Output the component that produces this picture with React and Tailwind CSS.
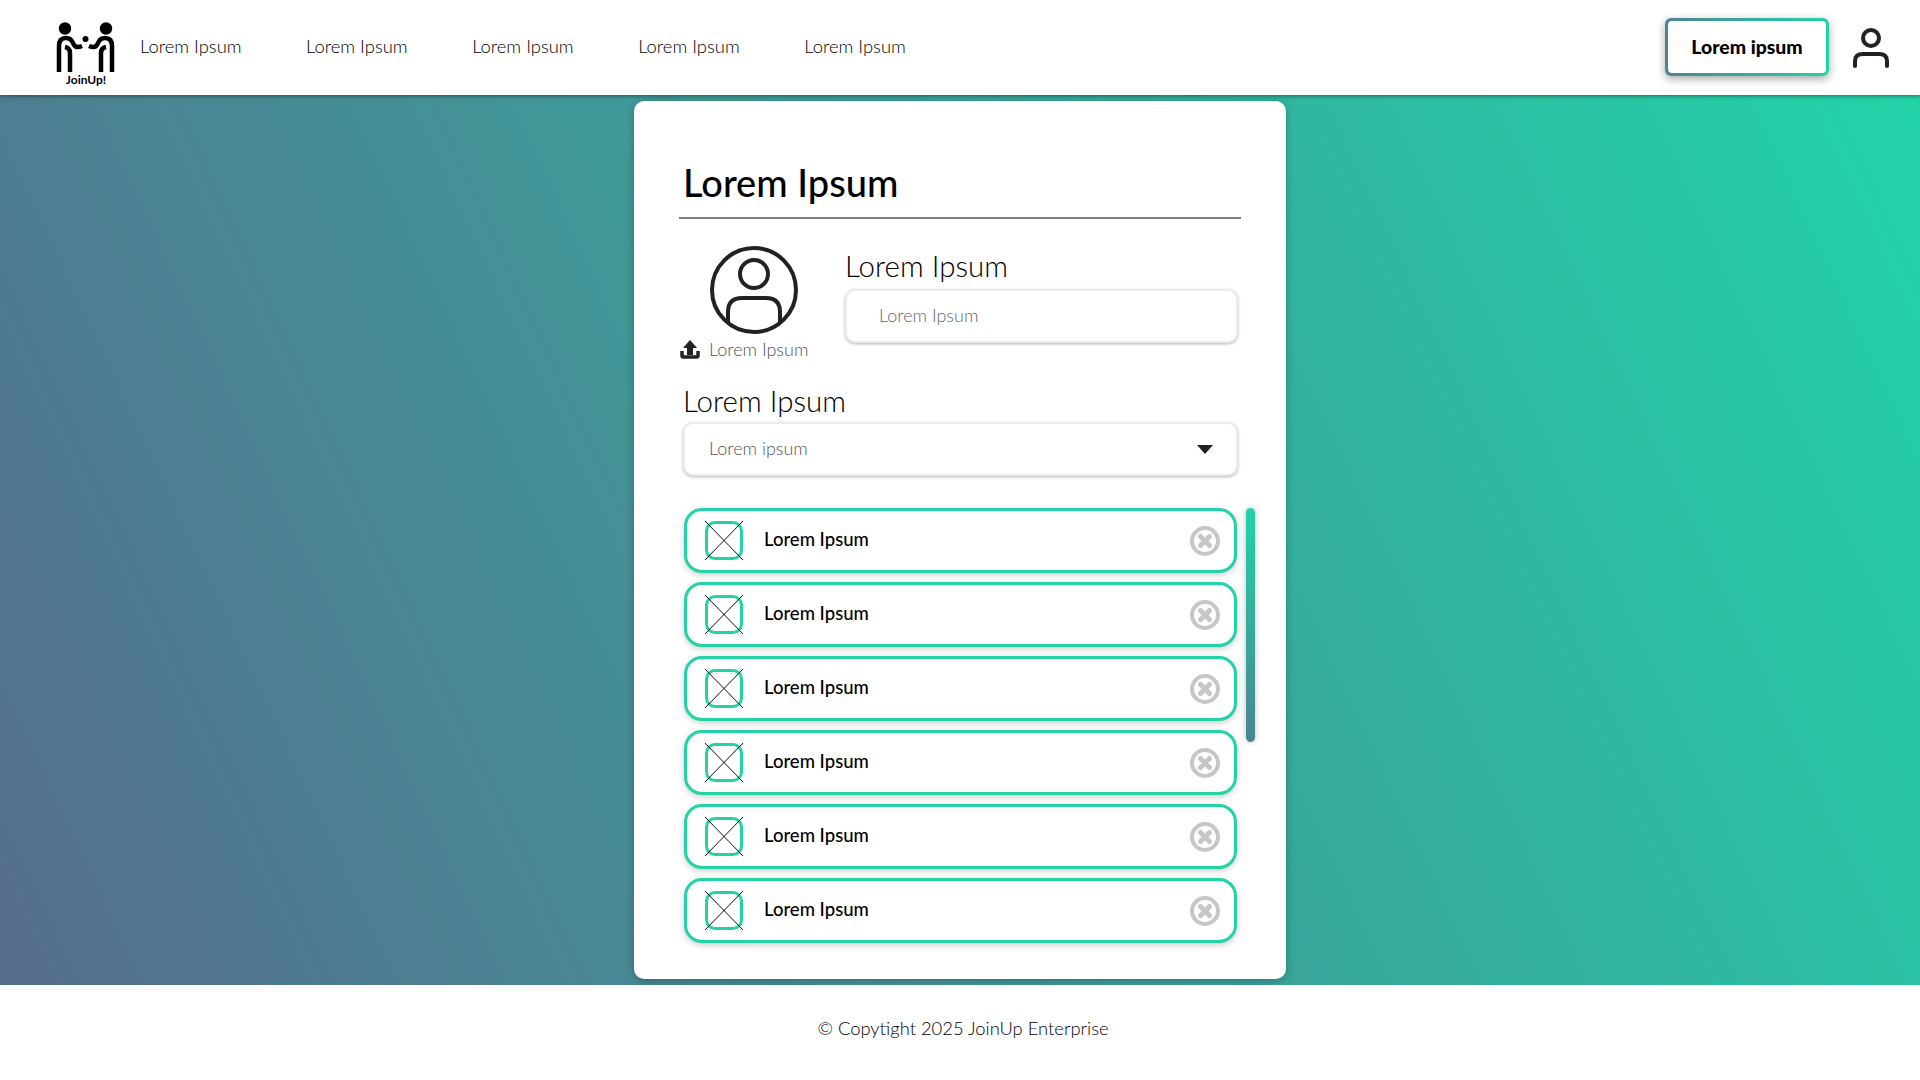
import React from 'react';

const rows = [0, 1, 2, 3, 4, 5];

const Logo = () => (
  <div className="mt-[12px] flex flex-col items-center w-[60px]">
    <svg width="60" height="52" viewBox="0 0 60 52" fill="none" stroke="#000" strokeWidth="4.5" strokeLinecap="round">
      <circle cx="9" cy="6.5" r="6.2" fill="#000" stroke="none" />
      <circle cx="50" cy="6.5" r="6.2" fill="#000" stroke="none" />
      <circle cx="29.5" cy="17" r="3" fill="#000" stroke="none" />
      <path d="M3 50 V24 Q3 16 10 16 Q15 16 17 21 Q19 27 26 24" strokeLinecap="butt" />
      <path d="M14 50 V31 Q14 26 9 25" strokeLinecap="butt" />
      <path d="M56 50 V24 Q56 16 49 16 Q44 16 42 21 Q40 27 33 24" strokeLinecap="butt" />
      <path d="M45 50 V31 Q45 26 50 25" strokeLinecap="butt" />
    </svg>
    <span className="text-[12px] leading-none font-bold text-black">JoinUp!</span>
  </div>
);

const CloseIcon = () => (
  <svg width="32" height="32" viewBox="0 0 32 32" fill="none" stroke="#c6c6c6">
    <circle cx="16" cy="16" r="13" strokeWidth="4" />
    <path d="M11.5 11.5 L20.5 20.5 M20.5 11.5 L11.5 20.5" strokeWidth="5" strokeLinecap="round" />
  </svg>
);

const Row = () => (
  <div className="h-[65px] flex items-center rounded-[18px] border-[3px] border-[#22d3a8] bg-white shadow-[0_2px_6px_rgba(0,0,0,0.2)] pl-[18px] pr-[13px]">
    <div className="relative w-[38px] h-[39px] rounded-[10px] border-[3px] border-[#22d3a8]">
      <svg className="absolute -inset-[3px]" width="38" height="39" viewBox="0 0 38 39" stroke="#111" strokeWidth="1">
        <path d="M0 0 L38 39 M38 0 L0 39" />
      </svg>
    </div>
    <span className="ml-[21px] mb-[1px] text-[18.5px] font-medium text-black flex-1">Lorem Ipsum</span>
    <CloseIcon />
  </div>
);

export default function App() {
  return (
    <div className="w-[1920px] h-[1080px] flex flex-col overflow-hidden bg-white font-['Lato',sans-serif]">
      <header className="relative z-10 h-[95px] shrink-0 flex items-center bg-white shadow-[0_1px_4px_rgba(0,0,0,0.45)] pl-14 pr-[31px]">
        <Logo />
        <nav className="ml-[24px] -mt-[2px] flex gap-[64.5px] text-[18.4px] font-light text-black">
          <a>Lorem Ipsum</a>
          <a>Lorem Ipsum</a>
          <a>Lorem Ipsum</a>
          <a>Lorem Ipsum</a>
          <a>Lorem Ipsum</a>
        </nav>
        <button className="ml-auto -mt-[2px] w-[164px] h-[58px] rounded-[6px] p-[3px] bg-[linear-gradient(90deg,#4b8491,#22d3a8)] shadow-[0_3px_8px_rgba(0,0,0,0.35)]">
          <span className="flex h-full items-center justify-center rounded-[4px] bg-white text-[19.4px] font-black text-black">Lorem ipsum</span>
        </button>
        <svg className="ml-6" width="36" height="40" viewBox="0 0 36 40" fill="none" stroke="#222" strokeWidth="4" strokeLinecap="round">
          <circle cx="18" cy="10" r="8" />
          <path d="M2 38 V33 Q2 26 10 26 H26 Q34 26 34 33 V38" />
        </svg>
      </header>

      <main className="h-[890px] shrink-0 flex justify-center pt-[6px] bg-[linear-gradient(65deg,#566c8c_0%,#22d3a8_100%)]">
        <section className="w-[652px] h-[878px] rounded-[10px] bg-white shadow-[0_2px_8px_rgba(0,0,0,0.25)] pt-[58px] pl-[45px] pr-[31px]">
          <h1 className="pl-[4px] text-[38px] leading-[46px] font-medium text-black">Lorem Ipsum</h1>
          <div className="mt-[12px] h-[2px] w-[562px] bg-[#7f7f7f]" />

          <div className="mt-[27px] flex">
            <div className="w-[166px] shrink-0">
              <svg className="ml-[30px] -mt-[1px]" width="90" height="90" viewBox="0 0 90 90" fill="none" stroke="#222" strokeWidth="4">
                <circle cx="45" cy="45" r="42" />
                <circle cx="45" cy="29" r="14" />
                <path d="M19 78 V67 Q19 53 33 53 H57 Q71 53 71 67 V78" />
              </svg>
              <div className="mt-[1px] pl-[1px] flex items-center gap-[9px]">
                <svg width="20" height="19" viewBox="0 0 20 19" fill="none">
                  <path d="M10 0 L17 8 H13 V15 H7 V8 H3 Z" fill="#222" />
                  <path d="M2 11 V15.5 Q2 17 3.5 17 H16.5 Q18 17 18 15.5 V11" stroke="#222" strokeWidth="3.5" />
                </svg>
                <span className="text-[18px] font-light text-[#555]">Lorem Ipsum</span>
              </div>
            </div>
            <div className="flex-1">
              <label className="block text-[29.5px] leading-[40px] font-light text-black">Lorem Ipsum</label>
              <div className="mt-[3px] w-[393px] h-[54px] flex items-center rounded-[10px] border-2 border-[#ececec] bg-white shadow-[0_1px_3px_rgba(0,0,0,0.3)] pl-[32px] text-[18px] font-light text-[#666]">
                <span className="mb-[2px]">Lorem Ipsum</span>
              </div>
            </div>
          </div>

          <label className="block mt-[20px] pl-[4px] text-[29.5px] leading-[36px] font-light text-black">Lorem Ipsum</label>
          <div className="mt-[3px] ml-[4px] w-[555px] h-[54px] flex items-center justify-between rounded-[10px] border-2 border-[#ececec] bg-white shadow-[0_1px_3px_rgba(0,0,0,0.3)] pl-[24px] pr-[23px] text-[18px] font-light text-[#555]">
            <span className="mb-[2px]">Lorem ipsum</span>
            <svg width="16" height="9" viewBox="0 0 16 9" fill="#222"><path d="M0 0 H16 L8 9 Z" /></svg>
          </div>

          <div className="mt-[32px] ml-[5px] flex gap-[9px]">
            <div className="w-[553px] shrink-0 flex flex-col gap-[9px]">
              {rows.map((r) => <Row key={r} />)}
            </div>
            <div className="w-[9px] h-[234px] shrink-0 rounded-full bg-[linear-gradient(180deg,#22d3a8,#4b8491)] shadow-[0_0_6px_rgba(0,0,0,0.25)]" />
          </div>
        </section>
      </main>

      <footer className="flex-1 flex justify-center pt-[31px] pl-[6px] text-[18.4px] leading-[24px] font-light text-black bg-white">
        © Copytight 2025 JoinUp Enterprise
      </footer>
    </div>
  );
}
